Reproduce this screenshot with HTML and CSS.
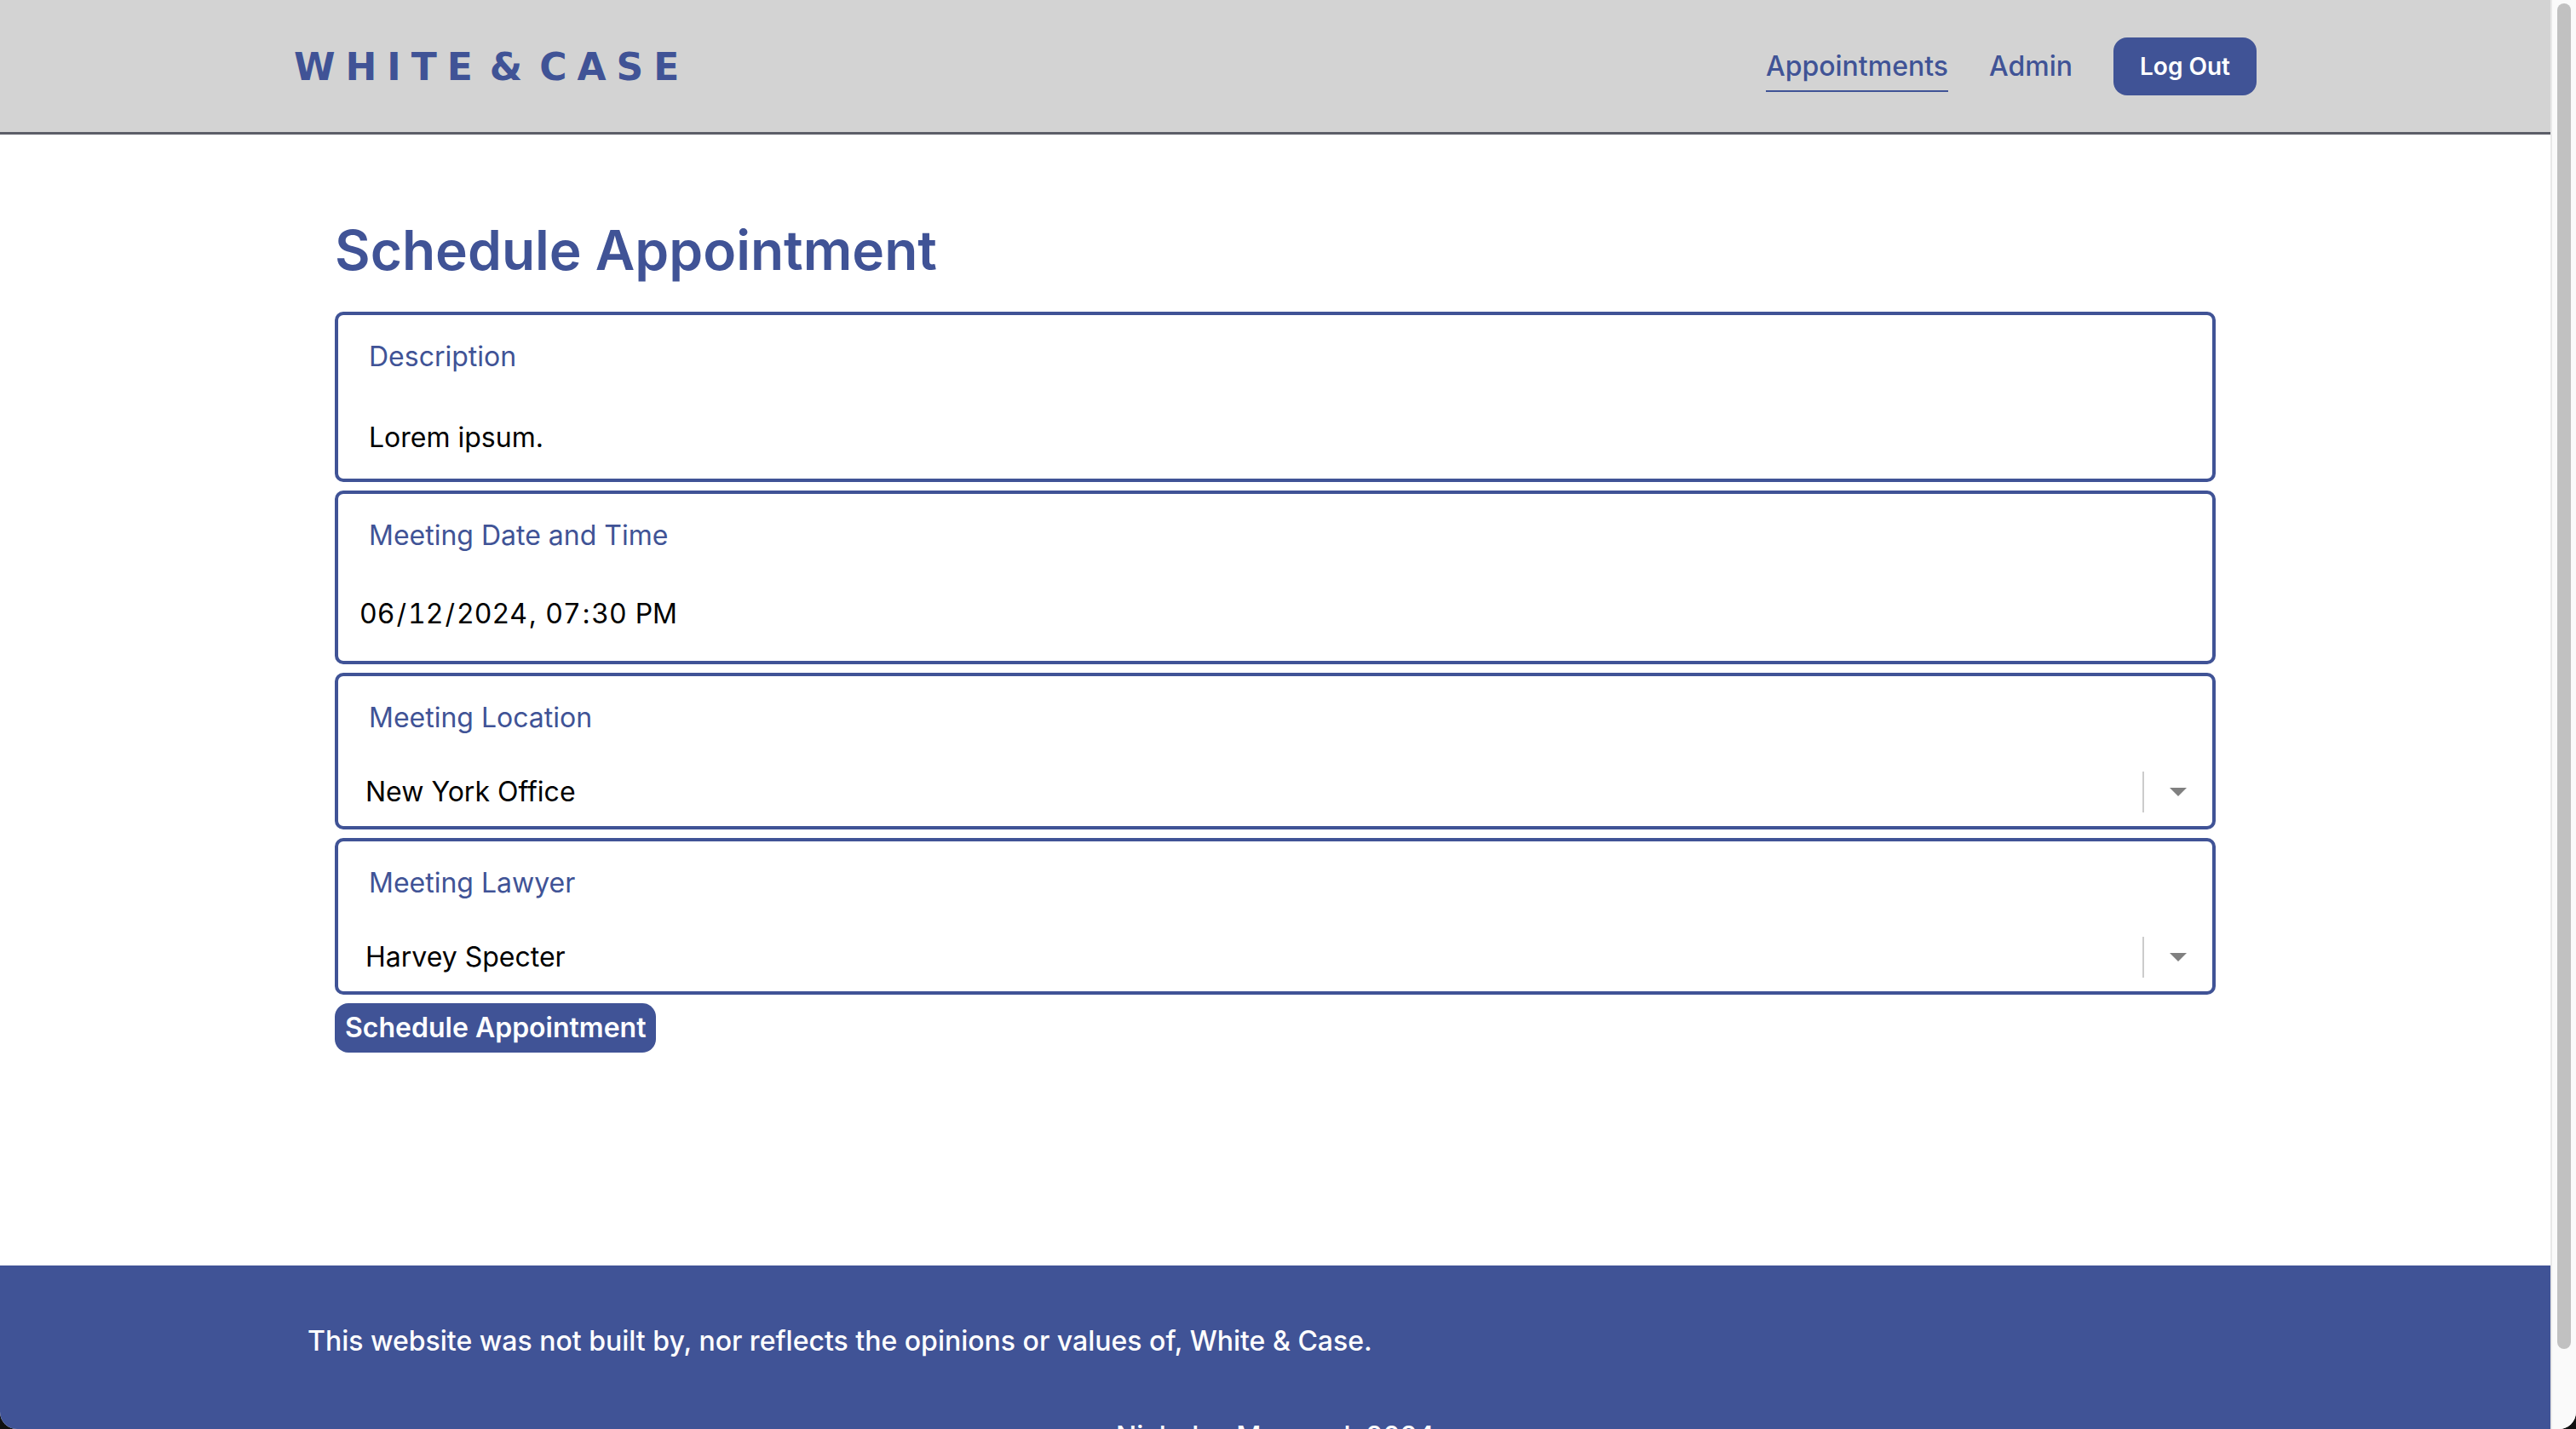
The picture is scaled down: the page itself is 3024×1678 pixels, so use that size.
FILE: index.html
```html
<!DOCTYPE html>
<html lang="en-US">
<head>
<meta charset="utf-8">
<meta name="viewport" content="width=device-width, initial-scale=1">
<title>Schedule Appointment</title>
<link rel="stylesheet" href="styles.css">
</head>
<body>
<div class="window">
  <div class="page">
    <header class="header">
      <div class="header-inner">
        <a class="logo" href="#"><span>WHITE</span> <span>&amp;</span> <span>CASE</span></a>
        <nav class="nav">
          <a class="nav-link nav-link-active" href="#">Appointments</a>
          <a class="nav-link" href="#">Admin</a>
          <button class="logout" type="button">Log Out</button>
        </nav>
      </div>
    </header>
    <main class="main">
      <h1 class="title">Schedule Appointment</h1>
      <form class="form">
        <div class="field">
          <label class="label" for="description">Description</label>
          <input class="control control-text" id="description" type="text" value="Lorem ipsum.">
        </div>
        <div class="field">
          <label class="label" for="datetime">Meeting Date and Time</label>
          <input class="control control-date" id="datetime" type="datetime-local" value="2024-06-12T19:30">
        </div>
        <div class="field">
          <label class="label" for="location">Meeting Location</label>
          <div class="select-row">
            <select class="control control-select" id="location"><option>New York Office</option></select>
            <span class="select-arrow"></span>
          </div>
        </div>
        <div class="field">
          <label class="label" for="lawyer">Meeting Lawyer</label>
          <div class="select-row">
            <select class="control control-select" id="lawyer"><option>Harvey Specter</option></select>
            <span class="select-arrow"></span>
          </div>
        </div>
        <button class="submit" type="submit">Schedule Appointment</button>
      </form>
    </main>
    <footer class="footer">
      <p class="disclaimer">This website was not built by, nor reflects the opinions or values of, White &amp; Case.</p>
      <p class="copyright">Nicholas Maynard, 2024</p>
    </footer>
  </div>
  <div class="scrollbar"><div class="thumb"></div></div>
</div>
</body>
</html>
```

FILE: styles.css
```css
:root {
  --blue: #405396;
}

* {
  box-sizing: border-box;
}

body {
  margin: 0;
  background: #111;
  color: #000;
  font-family: Inter, "Liberation Sans", sans-serif;
  font-size: 32px;
  line-height: 40px;
}

.window {
  display: flex;
  height: 100vh;
  overflow: hidden;
  background: #fff;
  border-radius: 0 0 20px 20px;
}

.page {
  flex: 1;
  height: 100vh;
  overflow: hidden;
  display: flex;
  flex-direction: column;
}

.header {
  flex: none;
  background: #d3d3d3;
  border-bottom: 3px solid #5c5e68;
}

.header-inner {
  display: flex;
  justify-content: space-between;
  align-items: center;
  max-width: 2304px;
  height: 155px;
  margin: 0 auto;
}

.logo {
  display: flex;
  gap: 8px;
  padding-top: 2px;
  color: var(--blue);
  font-family: "DejaVu Sans", sans-serif;
  font-size: 44px;
  font-weight: 700;
  letter-spacing: 12px;
  text-decoration: none;
}

.nav {
  display: flex;
  align-items: center;
  gap: 48px;
}

.nav-link {
  padding: 10px 0 8px;
  border-bottom: 2px solid transparent;
  color: var(--blue);
  font-weight: 500;
  text-decoration: none;
}

.nav-link-active {
  border-bottom-color: var(--blue);
}

.logout {
  height: 68px;
  padding: 0 31px;
  border: 0;
  border-radius: 16px;
  background: var(--blue);
  color: #fff;
  font: 600 28px/40px Inter, "Liberation Sans", sans-serif;
}

.main {
  flex: none;
  width: 100%;
  max-width: 2304px;
  margin: 0 auto;
  padding: 96px 48px 250px;
}

.title {
  margin: 0;
  padding-bottom: 32px;
  color: var(--blue);
  font-size: 64px;
  line-height: 80px;
  font-weight: 600;
}

.form {
  display: flex;
  flex-direction: column;
  align-items: flex-start;
  gap: 10px;
}

.field {
  display: flex;
  flex-direction: column;
  width: 100%;
  border: 4px solid var(--blue);
  border-radius: 10px;
}

.label {
  padding: 29px 36px 0;
  color: var(--blue);
}

.control {
  display: block;
  width: 100%;
  border: 0;
  outline: 0;
  background: transparent;
  color: #000;
  font: 400 32px/40px Inter, "Liberation Sans", sans-serif;
}

.control-text {
  height: 123px;
  padding: 34px 36px 8px;
}

.control-date {
  height: 127px;
  padding: 33px 23px 16px;
  font-variant-numeric: tabular-nums;
}

.control-date::-webkit-calendar-picker-indicator {
  display: none;
}

.control-date::-webkit-datetime-edit-month-field,
.control-date::-webkit-datetime-edit-day-field,
.control-date::-webkit-datetime-edit-year-field,
.control-date::-webkit-datetime-edit-hour-field,
.control-date::-webkit-datetime-edit-minute-field,
.control-date::-webkit-datetime-edit-ampm-field {
  padding: 0 2px;
  font-variant-numeric: tabular-nums;
}

.control-select {
  flex: 1;
  padding: 0 32px;
  appearance: none;
}

.select-row {
  display: flex;
  align-items: center;
  height: 76px;
  margin: 29px 0 2px;
}

.select-arrow {
  display: flex;
  justify-content: center;
  align-items: center;
  width: 82px;
  height: 48px;
  border-left: 2px solid #ccc;
}

.select-arrow::after {
  content: "";
  border: 10px solid transparent;
  border-top-color: gray;
  border-bottom-width: 0;
}

.submit {
  height: 58px;
  padding: 0 12px;
  border: 0;
  border-radius: 16px;
  background: var(--blue);
  color: #fff;
  font: 600 32px/40px Inter, "Liberation Sans", sans-serif;
}

.footer {
  flex: 1 0 auto;
  padding: 69px 0 32px;
  background: var(--blue);
  color: #fff;
  font-weight: 500;
}

.disclaimer {
  max-width: 2304px;
  margin: 0 auto 72px;
  padding: 0 16px;
}

.copyright {
  margin: 0;
  text-align: center;
}

.scrollbar {
  width: 30px;
  padding: 4px 6px 94px;
  border-left: 2px solid #e8e8e8;
  background: #fafafa;
}

.thumb {
  width: 16px;
  height: 100%;
  border-radius: 8px;
  background: #c1c1c1;
}
```
